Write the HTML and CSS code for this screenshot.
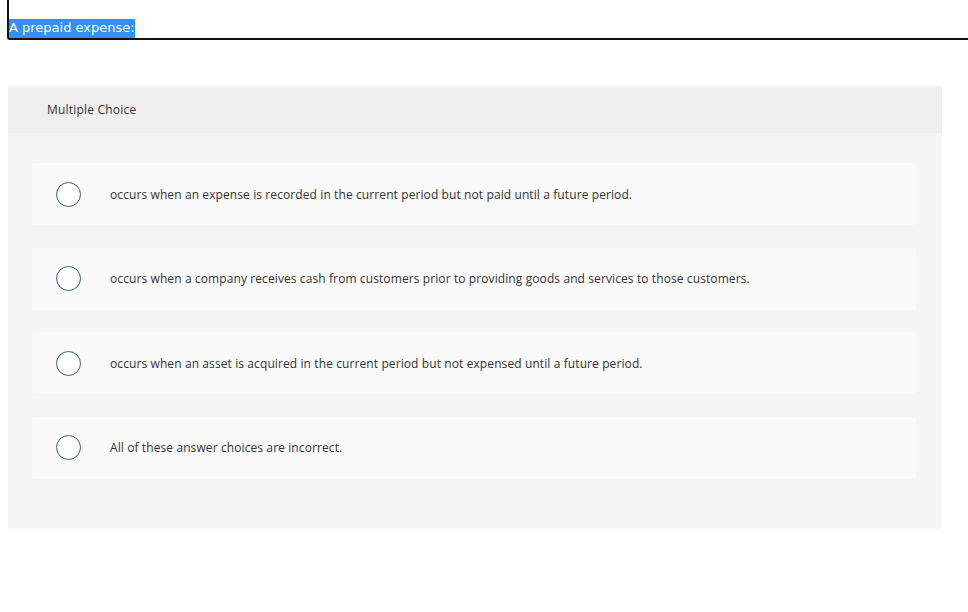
FILE: index.html
```html
<!DOCTYPE html>
<html>
<head>
<meta charset="utf-8">
<link rel="stylesheet" href="styles.css">
</head>
<body>
<div class="question"><span class="prompt">A prepaid expense:</span></div>
<div class="card">
  <div class="card-head">Multiple Choice</div>
  <div class="card-body">
    <div class="option"><span class="radio"></span><span class="label">occurs when an expense is recorded in the current period but not paid until a future period.</span></div>
    <div class="option"><span class="radio"></span><span class="label">occurs when a company receives cash from customers prior to providing goods and services to those customers.</span></div>
    <div class="option"><span class="radio"></span><span class="label">occurs when an asset is acquired in the current period but not expensed until a future period.</span></div>
    <div class="option"><span class="radio"></span><span class="label">All of these answer choices are incorrect.</span></div>
  </div>
</div>
</body>
</html>
```
FILE: styles.css
```css
html, body { margin: 0; padding: 0; background: #fff; }
body { font-family: "Open Sans", "Liberation Sans", sans-serif; color: #333; }
.question {
  margin-left: 7px;
  margin-right: -20px;
  padding-top: 19px;
  height: 19px;
  border-left: 2px solid #111;
  border-bottom: 2px solid #111;
  border-bottom-left-radius: 3px;
}
.prompt {
  display: inline-block;
  font-family: "DejaVu Sans", Verdana, sans-serif;
  font-size: 13px;
  line-height: 18px;
  height: 19px;
  background: #3390ff;
  color: #fff;
  vertical-align: top;
}
.card {
  margin: 46px 0 0 8px;
  width: 934px;
  background: #f5f5f5;
  border-radius: 2px;
}
.card-head {
  height: 47px;
  line-height: 47px;
  padding-left: 39px;
  background: #efefef;
  font-size: 12px;
  letter-spacing: 0.2px;
  color: #333;
  border-radius: 2px 2px 0 0;
}
.card-body {
  padding: 30px 26px 50px 24px;
  display: flex;
  flex-direction: column;
  gap: 22.6px;
}
.option {
  height: 62px;
  background: #fafafa;
  border-radius: 3px;
  display: flex;
  align-items: center;
  padding-left: 24px;
}
.radio {
  width: 23px;
  height: 23px;
  border: 1.5px solid #2f5f8e;
  border-radius: 50%;
  background: #fff;
  flex: none;
}
.label {
  margin-left: 29px;
  font-size: 12px;
  letter-spacing: 0.1px;
  color: #333;
}
```
